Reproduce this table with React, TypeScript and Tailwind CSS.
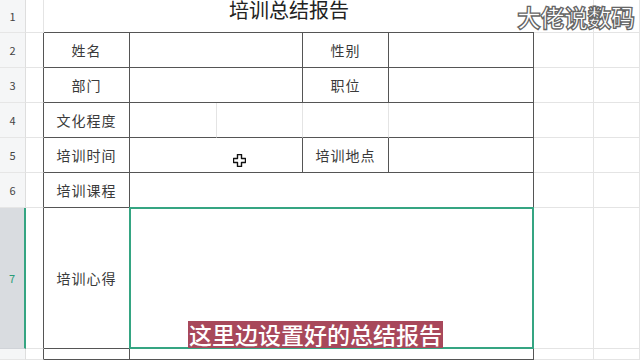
import React from "react";

const DARK = "border-[#555555]";
const LIGHT = "border-[#e4e4e4]";

function Cell({
  className = "",
  children,
}: {
  className?: string;
  children?: React.ReactNode;
}) {
  return (
    <div
      className={`flex items-center justify-center border-r border-b text-[14px] text-[#3a3a3a] tracking-[1px] ${className}`}
    >
      {children}
    </div>
  );
}

function RowHead({ n, row, active }: { n?: number; row: string; active?: boolean }) {
  return (
    <div
      className={`${row} col-start-1 flex items-center justify-center border-b text-[11px] ${
        active
          ? "bg-[#d9dce0] text-[#2a9d78] border-r-2 border-r-[#35a582] border-b-[#d0d3d8]"
          : "bg-[#f5f6f7] text-[#444] border-r border-r-[#dedede] border-b-[#e6e6e6]"
      }`}
    >
      {n}
    </div>
  );
}

function CursorCross() {
  return (
    <svg width="13" height="13" viewBox="0 0 13 13">
      <path
        d="M4.5 0.5h4v4h4v4h-4v4h-4v-4h-4v-4h4z"
        fill="#fff"
        stroke="#111"
        strokeWidth="1.4"
        strokeLinejoin="round"
      />
    </svg>
  );
}

export default function App() {
  return (
    <div
      className="relative w-[640px] h-[360px] overflow-hidden bg-white"
      style={{ fontFamily: '"Noto Sans CJK SC", "Noto Sans", sans-serif' }}
    >
      <div className="grid h-[360px] grid-cols-[26px_18px_86px_87px_86px_86px_145px_60px_1fr] grid-rows-[33px_35px_35px_35px_35px_35px_141px_1fr]">
        {/* row 1 */}
        <RowHead n={1} row="row-start-1" />
        <Cell className={`row-start-1 col-start-2 ${LIGHT}`} />
        <div className={`row-start-1 col-start-3 col-span-5 flex justify-center border-b ${DARK}`}>
          <span className="text-[20px] leading-[20px] text-[#222]">培训总结报告</span>
        </div>
        <Cell className={`row-start-1 col-start-8 ${LIGHT}`} />
        <Cell className={`row-start-1 col-start-9 ${LIGHT}`} />

        {/* row 2 */}
        <RowHead n={2} row="row-start-2" />
        <Cell className="row-start-2 col-start-2 border-r-[#555] border-b-[#e4e4e4]" />
        <Cell className={`row-start-2 col-start-3 ${DARK}`}>姓名</Cell>
        <Cell className={`row-start-2 col-start-4 col-span-2 ${DARK}`} />
        <Cell className={`row-start-2 col-start-6 ${DARK}`}>性别</Cell>
        <Cell className={`row-start-2 col-start-7 ${DARK}`} />
        <Cell className={`row-start-2 col-start-8 ${LIGHT}`} />
        <Cell className={`row-start-2 col-start-9 ${LIGHT}`} />

        {/* row 3 */}
        <RowHead n={3} row="row-start-3" />
        <Cell className="row-start-3 col-start-2 border-r-[#555] border-b-[#e4e4e4]" />
        <Cell className={`row-start-3 col-start-3 ${DARK}`}>部门</Cell>
        <Cell className={`row-start-3 col-start-4 col-span-2 ${DARK}`} />
        <Cell className={`row-start-3 col-start-6 ${DARK}`}>职位</Cell>
        <Cell className={`row-start-3 col-start-7 ${DARK}`} />
        <Cell className={`row-start-3 col-start-8 ${LIGHT}`} />
        <Cell className={`row-start-3 col-start-9 ${LIGHT}`} />

        {/* row 4 */}
        <RowHead n={4} row="row-start-4" />
        <Cell className="row-start-4 col-start-2 border-r-[#555] border-b-[#e4e4e4]" />
        <Cell className={`row-start-4 col-start-3 ${DARK}`}>文化程度</Cell>
        <Cell className="row-start-4 col-start-4 border-r-[#e4e4e4] border-b-[#555]" />
        <Cell className="row-start-4 col-start-5 border-r-[#e4e4e4] border-b-[#555]" />
        <Cell className="row-start-4 col-start-6 border-r-[#e4e4e4] border-b-[#555]" />
        <Cell className={`row-start-4 col-start-7 ${DARK}`} />
        <Cell className={`row-start-4 col-start-8 ${LIGHT}`} />
        <Cell className={`row-start-4 col-start-9 ${LIGHT}`} />

        {/* row 5 */}
        <RowHead n={5} row="row-start-5" />
        <Cell className="row-start-5 col-start-2 border-r-[#555] border-b-[#e4e4e4]" />
        <Cell className={`row-start-5 col-start-3 ${DARK}`}>培训时间</Cell>
        <Cell className={`row-start-5 col-start-4 col-span-2 ${DARK}`} />
        <Cell className={`row-start-5 col-start-6 ${DARK}`}>培训地点</Cell>
        <Cell className={`row-start-5 col-start-7 ${DARK}`} />
        <Cell className={`row-start-5 col-start-8 ${LIGHT}`} />
        <Cell className={`row-start-5 col-start-9 ${LIGHT}`} />

        {/* row 6 */}
        <RowHead n={6} row="row-start-6" />
        <Cell className="row-start-6 col-start-2 border-r-[#555] border-b-[#e4e4e4]" />
        <Cell className={`row-start-6 col-start-3 ${DARK}`}>培训课程</Cell>
        <Cell className={`row-start-6 col-start-4 col-span-4 ${DARK}`} />
        <Cell className={`row-start-6 col-start-8 ${LIGHT}`} />
        <Cell className={`row-start-6 col-start-9 ${LIGHT}`} />

        {/* row 7 */}
        <RowHead n={7} row="row-start-7" active />
        <Cell className="row-start-7 col-start-2 border-r-[#555] border-b-[#e4e4e4]" />
        <Cell className={`row-start-7 col-start-3 ${DARK}`}>培训心得</Cell>
        <div className="row-start-7 col-start-4 col-span-4 -ml-[1px] -mt-[1px] border-2 border-[#35a582]" />
        <Cell className={`row-start-7 col-start-8 ${LIGHT}`} />
        <Cell className={`row-start-7 col-start-9 ${LIGHT}`} />

        {/* row 8 (mostly off screen) */}
        <RowHead row="row-start-8" />
        <Cell className="row-start-8 col-start-2 border-r-[#555] border-b-[#e4e4e4]" />
        <Cell className={`row-start-8 col-start-3 ${DARK}`} />
        <Cell className={`row-start-8 col-start-4 col-span-4 ${DARK}`} />
        <Cell className={`row-start-8 col-start-8 ${LIGHT}`} />
        <Cell className={`row-start-8 col-start-9 ${LIGHT}`} />
      </div>

      {/* mouse cursor */}
      <div className="absolute left-[233px] top-[154px]">
        <CursorCross />
      </div>

      {/* channel watermark */}
      <div className="absolute left-[517px] top-[4px] text-[24px] font-bold leading-[26px] tracking-[-0.5px] text-white [-webkit-text-stroke:1.3px_#666]">
        大佬说数码
      </div>

      {/* subtitle */}
      <div className="absolute left-[188px] top-[321px] h-[27px] bg-[#a8485b] px-[1px] text-[23px] leading-[27px] font-medium text-white">
        这里边设置好的总结报告
      </div>
    </div>
  );
}
